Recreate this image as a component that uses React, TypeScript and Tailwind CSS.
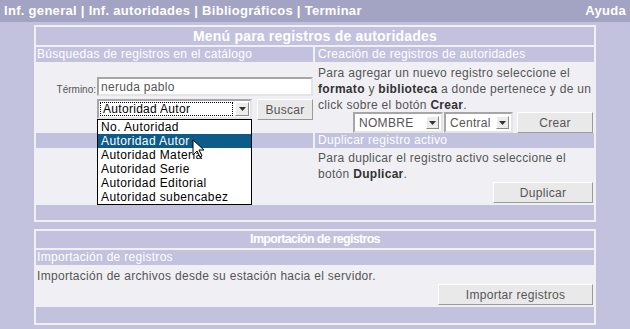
import React from "react";

const sans = "font-['Liberation_Sans',Arial,sans-serif]";

const Btn = ({ label, w }: { label: string; w: string }) => (
    <button
        className={`${w} h-[21px] bg-[#e9e9e9] border border-t-white border-l-white border-b-[#9a9a9a] border-r-[#9a9a9a] text-[12px] text-[#555] tracking-[0.3px]`}
    >
        {label}
    </button>
);

const Select = ({ label, w }: { label: string; w: string }) => (
    <div
        className={`${w} h-[21px] flex items-center bg-white border-2 border-t-[#a6a6a6] border-l-[#a6a6a6] border-b-[#e4e4e4] border-r-[#e4e4e4] text-[12px] text-[#555] tracking-[0.3px]`}
    >
        <span className="flex-1 pl-[4px] leading-none">{label}</span>
        <span className="w-[13px] h-[13px] mr-[2px] flex items-center justify-center bg-[#ececec] border border-t-white border-l-white border-b-[#8a8a8a] border-r-[#8a8a8a]">
            <svg width="7" height="4" viewBox="0 0 7 4">
                <path d="M0 0h7L3.5 4z" fill="#333" />
            </svg>
        </span>
    </div>
);

const options = [
    "No. Autoridad",
    "Autoridad Autor",
    "Autoridad Materia",
    "Autoridad Serie",
    "Autoridad Editorial",
    "Autoridad subencabez",
];

export default function App() {
    return (
        <div className={`${sans} w-[630px] h-[329px] bg-[#c2c2df] overflow-hidden`}>
            {/* barra superior */}
            <div className="h-[22px] bg-[#a3a4c3] flex items-center justify-between px-[4px] text-white font-bold text-[13px] tracking-[0.3px]">
                <span>Inf. general | Inf. autoridades | Bibliográficos | Terminar</span>
                <span>Ayuda</span>
            </div>

            {/* panel autoridades */}
            <div className="ml-[34px] mt-[3px] w-[562px] border-2 border-[#f0f0f4] bg-[#f0f0f4] flex flex-col gap-[2px]">
                <div className="h-[18px] bg-[#c2c2df] flex items-center justify-center text-white text-[14px] font-bold tracking-[0.2px]">
                    Menú para registros de autoridades
                </div>

                <div className="grid grid-cols-[277px_279px] grid-rows-[15px_71px_15px_57px] gap-x-[2px] text-[12px] text-[#555] tracking-[0.3px]">
                    <div className="bg-[#c2c2df] text-white pl-[1px] leading-[15px]">
                        Búsquedas de registros en el catálogo
                    </div>
                    <div className="bg-[#c2c2df] text-white pl-[3px] leading-[15px]">
                        Creación de registros de autoridades
                    </div>

                    {/* búsqueda */}
                    <div className="relative z-10 pt-[15px] flex flex-col gap-[3px]">
                        <div className="flex items-end">
                            <span className="w-[61px] text-right text-[10px] tracking-normal pr-[1px] leading-none mb-[1px]">
                                Término:
                            </span>
                            <div className="w-[216px] h-[19px] bg-white border-2 border-t-[#a6a6a6] border-l-[#a6a6a6] border-b-[#e4e4e4] border-r-[#e4e4e4] flex items-center pl-[2px] text-[#555]">
                                neruda pablo
                            </div>
                        </div>
                        <div className="flex items-start pl-[61px] gap-[5px]">
                            <div className="relative">
                                <div className="w-[155px] h-[20px] flex items-center bg-white border-2 border-t-[#a6a6a6] border-l-[#a6a6a6] border-b-[#e4e4e4] border-r-[#e4e4e4] text-black">
                                    <span className="flex-1 h-[14px] ml-[1px] mr-[2px] border border-dotted border-black pl-[2px] flex items-center leading-none">
                                        Autoridad Autor
                                    </span>
                                    <span className="w-[14px] h-[14px] mr-[1px] flex items-center justify-center bg-[#ececec] border border-t-white border-l-white border-b-[#8a8a8a] border-r-[#8a8a8a]">
                                        <svg width="7" height="4" viewBox="0 0 7 4">
                                            <path d="M0 0h7L3.5 4z" fill="#333" />
                                        </svg>
                                    </span>
                                </div>
                                <ul className="absolute left-0 top-[20px] w-[155px] bg-white border border-black text-black tracking-[0.4px]">
                                    {options.map((o, i) => (
                                        <li
                                            key={o}
                                            className={`h-[14px] leading-[14px] pl-[3px] ${i === 1 ? "bg-[#0d5b89] text-white" : ""}`}
                                        >
                                            {o}
                                        </li>
                                    ))}
                                </ul>
                                <svg className="absolute left-[95px] top-[40px]" width="13" height="19" viewBox="0 0 13 19">
                                    <path d="M1 1v15l4-4 3 6 2-1-3-6h5z" fill="white" stroke="black" strokeWidth="1" />
                                </svg>
                            </div>
                            <Btn label="Buscar" w="w-[57px]" />
                        </div>
                    </div>

                    {/* creación */}
                    <div className="flex flex-col pl-[3px] pt-[3px]">
                        <p className="leading-[16px]">
                            Para agregar un nuevo registro seleccione el{" "}
                            <b className="text-[#333]">formato</b> y{" "}
                            <b className="text-[#333]">biblioteca</b> a donde pertenece y de un click sobre el botón{" "}
                            <b className="text-[#333]">Crear</b>.
                        </p>
                        <div className="flex justify-end items-center pr-[1px] mt-[-1px]">
                            <Select label="NOMBRE" w="w-[90px]" />
                            <div className="ml-[1px]">
                                <Select label="Central" w="w-[69px]" />
                            </div>
                            <div className="ml-[4px]">
                                <Btn label="Crear" w="w-[76px]" />
                            </div>
                        </div>
                    </div>

                    <div className="bg-[#c2c2df]" />
                    <div className="bg-[#c2c2df] text-white pl-[3px] leading-[15px]">
                        Duplicar registro activo
                    </div>

                    <div />
                    <div className="flex flex-col pl-[3px] pt-[2px]">
                        <p className="leading-[16px]">
                            Para duplicar el registro activo seleccione el botón{" "}
                            <b className="text-[#333]">Duplicar</b>.
                        </p>
                        <div className="flex justify-end pr-[1px]">
                            <Btn label="Duplicar" w="w-[100px]" />
                        </div>
                    </div>
                </div>

                <div className="h-[15px] bg-[#c2c2df] -mt-[2px]" />
            </div>

            {/* panel importación */}
            <div className="ml-[34px] mt-[7px] w-[562px] border-2 border-[#f0f0f4] bg-[#f0f0f4] flex flex-col gap-[2px] text-[12px] text-[#555] tracking-[0.3px]">
                <div className="h-[17px] bg-[#c2c2df] flex items-center justify-center text-white font-bold text-[12.5px] tracking-[-0.7px]">
                    Importación de registros
                </div>
                <div className="h-[15px] bg-[#c2c2df] text-white pl-[1px] leading-[15px]">
                    Importación de registros
                </div>
                <div className="h-[40px] flex flex-col -mt-[2px] pt-[3px]">
                    <p className="leading-[16px] pl-[1px]">
                        Importación de archivos desde su estación hacia el servidor.
                    </p>
                    <div className="flex justify-end pr-[1px]">
                        <Btn label="Importar registros" w="w-[155px]" />
                    </div>
                </div>
                <div className="h-[16px] bg-[#c2c2df]" />
            </div>
        </div>
    );
}
